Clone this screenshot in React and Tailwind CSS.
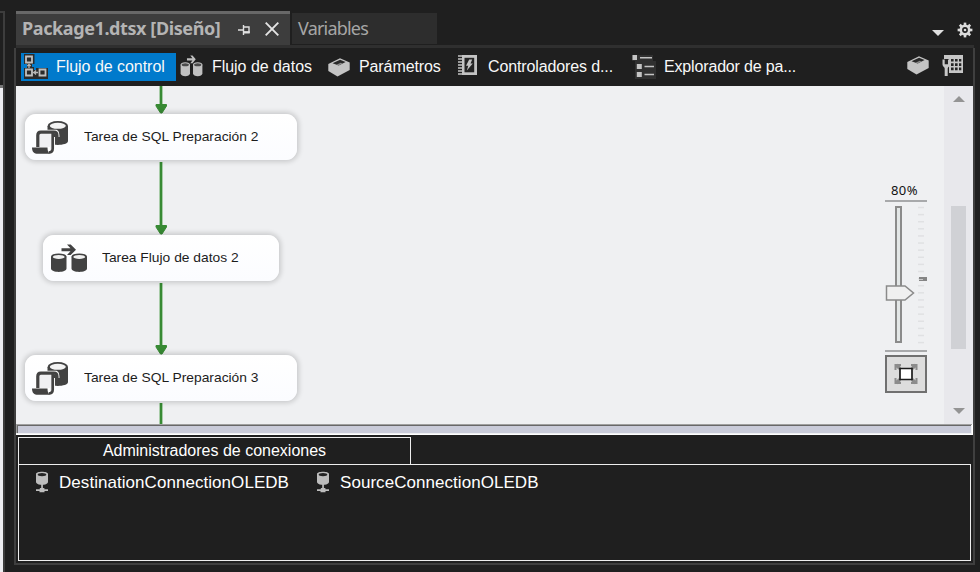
const ui = "font-['Liberation_Sans',Arial,sans-serif]";

function ControlFlowIcon() {
  return (
    <svg width="24" height="26" viewBox="0 0 24 26" fill="none" className="shrink-0">
      <path d="M0 0h10.500v10H8v3h2v3h2v-2h12v11H0V14h3v-4H0z" fill="#2b2b2b" />
      <path d="M2 2.500h6v6h-6z M2 15.500h6v6h-6z M15.500 15.500h6v6h-6z" stroke="#c0c0c0" strokeWidth="1.800" />
      <path d="M5 14v-4M3.300 12L5 10.300 6.700 12M9 18.500h5M12 16.500l-2 2 2 2" stroke="#b8b8b8" strokeWidth="1.300" />
    </svg>
  );
}

function DataFlowIcon({ dark = false, className = "" }) {
  const c = dark ? "#424242" : "#c0c0c0";
  const hole = dark ? "#f0f0f0" : "#4a4a4a";
  return (
    <svg viewBox="0 0 38 29" preserveAspectRatio="none" className={"shrink-0 " + className}>
      <path d="M11.500 4.300h9L17 .5h3.700L26 5.700 20.700 11H17l3.500-3.700h-9z" fill={c} />
      {[1, 21.500].map((x) => (
        <g key={x}>
          <path d={`M${x} 12.500v12c0 4.500 15.500 4.500 15.500 0v-12z`} fill={c} />
          <ellipse cx={x + 7.75} cy="12.700" rx="7.700" ry="3.300" fill={c} />
          <ellipse cx={x + 7.75} cy="12.900" rx="5.900" ry="2" fill={hole} />
        </g>
      ))}
    </svg>
  );
}

function BoxIcon() {
  return (
    <svg width="24" height="21" viewBox="0 0 24 21" className="shrink-0">
      <path d="M1.300 7L13 1.300l9.700 4.200v7.500L10.500 19.500 1.300 14z" fill="#c4c4c4" />
      <path d="M5.500 6.300l7.600-3.500 5.500 2.300-6.900 3.500z" fill="#292929" />
      <path d="M9.500 7.700l4.200-2 1.800.8-4 2z" fill="#8a8a8a" />
    </svg>
  );
}

function EventIcon() {
  return (
    <svg width="22" height="22" viewBox="0 0 22 22" className="shrink-0">
      <path d="M5 1h15v20H5z" fill="#c4c4c4" />
      <path d="M7.500 3.800h9.700v14.500h-9.700z" fill="#252525" />
      <path d="M1 2h4M1 5h4M1 8h4M1 11h4M1 14h4M1 17h4M1 20h4" stroke="#c4c4c4" strokeWidth="1.400" />
      <path d="M12.200 5.500h3l-1.700 4h2.300L9.800 16.500l1.500-4.700H9z" fill="#c4c4c4" />
    </svg>
  );
}

function ExplorerIcon() {
  return (
    <svg width="24" height="24" viewBox="0 0 24 24" className="shrink-0">
      <path d="M-1-1h22v7h3v18H3V6h-4z" fill="#303030" />
      <path d="M.500 0h4.500v5H.500zM4.800 9h5v5h-5zM4.800 17h5v5h-5zM8 2h12v1.500H8zM12.500 10.800h9.500v1.500h-9.500zM12.500 18.800h9.500v1.500h-9.500z" fill="#c4c4c4" />
    </svg>
  );
}

function VariablesIcon() {
  return (
    <svg width="22" height="23" viewBox="0 0 22 23" className="shrink-0">
      <path d="M2 1h19v18H7V5H2z" fill="#c6c6c6" />
      <path d="M9 5h2.600v2.600H9zM13 5h2.600v2.600H13zM17 5h2.300v2.600H17zM9 9.300h2.600v2.600H9zM13 9.300h2.600v2.600H13zM17 9.300h2.300v2.600H17zM9 13.600h2.600v2.600H9zM13 13.600h2.600v2.600H13zM17 13.600h2.300v2.600H17z" fill="#242424" />
      <path d="M2.700 5H6v5H2.700z" fill="#242424" />
      <path d="M.5 5.500v5c0 2 2.200 2.700 2.200 4V22h3v-7.500c0-1.300 2.200-2 2.200-4v-5H6v4.700H2.700V5.500z" fill="#c6c6c6" />
    </svg>
  );
}

function SqlIcon() {
  return (
    <svg width="37" height="35" viewBox="0 0 37 35" className="shrink-0">
      <path d="M15.500 6v16c2 4 20.500 4 20.500-1V6z" fill="#424242" />
      <ellipse cx="25.800" cy="6" rx="10.200" ry="5" fill="#424242" />
      <ellipse cx="25.800" cy="5.800" rx="8" ry="3" fill="#f3f3f3" />
      <path d="M3 9.700h20.500c2.800 0 4 2.500 4 7.300H23V34H3z" fill="#fff" />
      <path d="M7 14h14v14l-3 4v-5H7z" fill="#f0f0f2" />
      <path d="M5.800 27V15.300c0-2.200 1-3.200 3-3.200h13.200c2.300 0 3 1 3 3.400H21" stroke="#424242" strokeWidth="3.200" fill="none" />
      <path d="M20.700 13v15.500c0 2.800-1 4-4 4" stroke="#424242" strokeWidth="2.700" fill="none" />
      <path d="M0 27.500h15.500c0 3 .5 5 2.500 6.300H6c-4 0-6-2-6-6.300z" fill="#424242" />
    </svg>
  );
}

function ConnectionIcon() {
  return (
    <svg width="14" height="22" viewBox="0 0 14 22" className="shrink-0">
      <path d="M1 3c0-3 12-3 12 0v8c0 1.500-2 2.500-4.500 2.700h-.6v3.300h1.500v1.200H13v1.900H9.500V21.300h-5v-1.200H1v-1.900h3.800V17h1.400v-3.300h-.7C3 13.500 1 12.500 1 11z" fill="#bdbdbd" />
      <ellipse cx="7" cy="3.600" rx="4.300" ry="1.600" fill="#242424" />
    </svg>
  );
}

function ToolbarTab({ icon, label, className = "", iconClass = "", textClass = "" }) {
  return (
    <div className={"flex h-7 items-center " + className}>
      <div className={"flex shrink-0 items-center " + iconClass}>{icon}</div>
      <span className={"whitespace-nowrap text-[16px] leading-7 text-[#f8f8f8] " + textClass}>{label}</span>
    </div>
  );
}

function TaskNode({ icon, label, className, iconClass, textClass }) {
  return (
    <div className={"absolute flex h-[46px] items-center rounded-[11px] bg-linear-to-b from-white to-[#fbfcff] shadow-[0_0_5px_2px_rgba(0,0,0,0.16)] " + className}>
      <div className={"shrink-0 " + iconClass}>{icon}</div>
      <span className={"origin-left whitespace-nowrap text-[13px] leading-4 text-[#1c1c1c] " + textClass}>{label}</span>
    </div>
  );
}

function Arrows() {
  return (
    <svg className="absolute left-0 top-0" width="300" height="338" viewBox="0 0 300 338">
      {[[0, 18, 28], [76, 139, 149], [197, 259, 269], [317, 338, 0]].map(([a, b, tip]) => (
        <g key={a}>
          <path d={`M145 ${a}V${b}`} stroke="#b5d3b5" strokeWidth="4" />
          <path d={`M145 ${a}V${b}`} stroke="#388a34" strokeWidth="2.200" />
          {tip > 0 && <path d={`M140 ${b + 0.5}H150.500V${b + 2}L146 ${tip - 1}H144.500L140 ${b + 2}z`} fill="#388a34" stroke="#388a34" strokeWidth="1" strokeLinejoin="round" />}
        </g>
      ))}
    </svg>
  );
}

function ZoomPanel() {
  const ticks = Array.from({ length: 20 }, (_, i) => 7.5 + i * 7.11);
  return (
    <div className="absolute left-[869px] top-[96px] flex w-[42px] flex-col">
      <span className="h-[18px] pl-[6px] font-['Noto_Sans',sans-serif] text-[13px] leading-[17px] tracking-[0.4px] text-[#111]">80%</span>
      <svg width="42" height="154" viewBox="0 0 42 154">
        <path d="M0 1h42M0 151h42" stroke="#a8a9ab" strokeWidth="2" />
        <path d="M11 7h5v135h-5z" fill="#e3e7e7" stroke="#8b8b8b" strokeWidth="2" />
        {ticks.map((y) => (
          <path key={y} d={`M33 ${y}h6`} stroke="#e0e1e3" strokeWidth="1.500" />
        ))}
        <path d="M34 77h8v4h-8z" fill="#858585" />
        <path d="M34 79.500h4" stroke="#c9c9c9" />
        <path d="M1.500 86h18.500l8.500 7-8.500 7H1.500z" fill="#f0f0f0" stroke="#8a8a8a" strokeWidth="1.500" />
      </svg>
      <div className="mt-px flex h-[38px] w-[42px] items-center justify-center border-2 border-[#707070] bg-[#dddddd]">
        <svg width="24" height="22" viewBox="0 0 24 22" fill="none">
          <path d="M1.500 7V2H7M17 2h5.500v5M22.500 15v5H17M7 20H1.500v-5" stroke="#8c8c8c" strokeWidth="2" />
          <path d="M2 2l4 3.500M22 2l-4 3.500M2 20l4-3.500M22 20l-4-3.500" stroke="#8c8c8c" strokeWidth="3.500" />
          <path d="M6 5.500h12v11H6z" fill="#fff" stroke="#1c1c1c" strokeWidth="1.700" />
        </svg>
      </div>
    </div>
  );
}

function Connection({ label }) {
  return (
    <div className="flex h-6 items-center gap-[9.500px]">
      <ConnectionIcon />
      <span className="mt-[2px] whitespace-nowrap pl-[0.5px] text-[17px] leading-6 tracking-[0.05px] text-white">{label}</span>
    </div>
  );
}

const gearTeeth = [0, 45, 90, 135, 180, 225, 270, 315];

export default function App() {
  return (
    <div className={"flex h-[572px] w-[980px] overflow-hidden bg-[#1f1f1f] " + ui}>
      <aside className="flex w-[5px] shrink-0 flex-col pt-[11px]">
        <div className="h-[74px] border-r-2 border-t-2 border-[#3d3d3d]" />
        <div className="h-[3px] border-r-2 border-[#3d3d3d] bg-[#777]" />
        <div className="flex-1 border-r-2 border-[#3d3d3d] bg-[#eeeef2]" />
      </aside>

      <main className="ml-[9px] flex w-[961px] shrink-0 flex-col">
        <header className="flex h-[45px] shrink-0 items-end pl-[2px]">
          <div className="flex h-[34px] w-[274px] items-center border-t-[3px] border-[#686868] bg-[#3d3d3d] pl-[6px]">
            <span className="-mt-[3px] w-[216px] whitespace-nowrap font-['Noto_Sans',sans-serif] text-[18px] font-bold leading-[30px] tracking-[-0.4px] text-[#b4b4b4]">Package1.dtsx [Diseño]</span>
            <svg width="12" height="12" viewBox="0 0 12 12" fill="none" stroke="#e0e0e0">
              <path d="M0 6h5M5.500 1v10M5.500 3h5.500v6" strokeWidth="1.400" />
              <path d="M5.500 8.300H11.700" strokeWidth="2.400" />
            </svg>
            <svg width="14" height="14" viewBox="0 0 14 14" fill="none" stroke="#e4e4e4" strokeWidth="1.900" className="-mt-[2px] ml-[15px]">
              <path d="M.7.7l12.600 12.600M13.300.7L.7 13.300" />
            </svg>
          </div>
          <div className="mb-px ml-[2px] h-[31px] w-[145px] bg-[#2d2d2d] pl-[6px]">
            <span className="block font-['Noto_Sans',sans-serif] text-[18px] leading-[30px] tracking-[-0.8px] text-[#a6a6a6]">Variables</span>
          </div>
          <div className="ml-auto flex items-center gap-[13px] pb-[7px] pr-[3px]">
            <svg width="12" height="6" viewBox="0 0 12 6" className="mt-[5px]"><path d="M0 0h12L6 6z" fill="#e0e0e0" /></svg>
            <svg width="16" height="16" viewBox="0 0 16 16" fill="none" stroke="#dcdcdc" className="-mr-px">
              <circle cx="8" cy="8" r="4.200" strokeWidth="2.600" />
              <circle cx="8" cy="8" r="1.300" fill="#dcdcdc" stroke="none" />
              {gearTeeth.map((a) => (
                <path key={a} d="M8 .6v3" strokeWidth="2.600" transform={`rotate(${a} 8 8)`} />
              ))}
            </svg>
          </div>
        </header>
        <div className="ml-[2px] h-[3px] w-[958px] shrink-0 bg-[#2f2f2f]" />

        <section className="flex h-[517px] shrink-0 flex-col border-x-2 border-b-2 border-[#3f3f3f]">
          <nav className="flex h-[38px] shrink-0 items-center pl-[5px]">
            <ToolbarTab label="Flujo de control" icon={<ControlFlowIcon />} className="w-[155px] bg-[#007acc] pl-[3px]" iconClass="w-8" textClass="tracking-[-0.04px]" />
            <ToolbarTab label="Flujo de datos" icon={<DataFlowIcon className="-mt-[2px] h-[22px] w-[23px]" />} className="w-[147px] pl-[4px]" iconClass="w-8" textClass="tracking-[-0.04px]" />
            <ToolbarTab label="Parámetros" icon={<BoxIcon />} className="w-[129px] pl-[4px]" iconClass="w-8" textClass="tracking-[-0.1px]" />
            <ToolbarTab label="Controladores d..." icon={<EventIcon />} className="w-[180px] pl-[5px]" iconClass="-mt-1 w-[31px]" textClass="tracking-[-0.12px]" />
            <ToolbarTab label="Explorador de pa..." icon={<ExplorerIcon />} iconClass="w-8" textClass="tracking-[-0.16px]" />
            <div className="ml-auto flex items-center gap-[12px] pr-[9px]">
              <div className="-mt-[4px]"><BoxIcon /></div>
              <div className="-mt-[4px]"><VariablesIcon /></div>
            </div>
          </nav>

          <div className="relative flex h-[338px] shrink-0 justify-end overflow-hidden bg-[#eff0f2]">
            <Arrows />
            <TaskNode label="Tarea de SQL Preparación 2" icon={<SqlIcon />} className="left-[9px] top-[28px] w-[272px]" iconClass="ml-[7px] w-[51.5px]" textClass="scale-x-[1.062]" />
            <TaskNode label="Tarea Flujo de datos 2" icon={<DataFlowIcon dark className="h-[29px] w-[38px]" />} className="left-[27px] top-[149px] w-[236px]" iconClass="ml-[7px] w-[52px]" textClass="scale-x-[1.062]" />
            <TaskNode label="Tarea de SQL Preparación 3" icon={<SqlIcon />} className="left-[9px] top-[269px] w-[272px]" iconClass="ml-[7px] w-[51.5px]" textClass="scale-x-[1.062]" />
            <ZoomPanel />
            <div className="flex w-[29px] flex-col items-center bg-[#e8e8ec] pt-[10px]">
              <svg width="12" height="6" viewBox="0 0 12 6"><path d="M0 6L6 0l6 6z" fill="#949494" /></svg>
              <div className="mt-[104px] h-[143px] w-[15px] bg-[#d0d1d5]" />
              <svg width="12" height="6" viewBox="0 0 12 6" className="mt-[59px]"><path d="M0 0h12L6 6z" fill="#949494" /></svg>
            </div>
          </div>

          <div className="h-[11px] shrink-0 border-b border-r border-white bg-[#eff0f2]">
            <div className="h-[9px] border-l border-t border-[#a0a0a0] pr-px">
              <div className="h-2 border-l border-t border-[#686868] bg-[#c9cbd9]" />
            </div>
          </div>

          <div className="flex flex-1 flex-col px-[2px] pb-[2px] pt-[2px]">
            <div className="h-[27px] w-[393px] border border-b-0 border-[#ededed] text-center text-[16px] leading-[25px] text-white">Administradores de conexiones</div>
            <div className="flex flex-1 border border-[#ededed] pl-[16px] pt-[5px]">
              <div className="w-[281px]"><Connection label="DestinationConnectionOLEDB" /></div>
              <Connection label="SourceConnectionOLEDB" />
            </div>
          </div>
        </section>
      </main>
    </div>
  );
}
